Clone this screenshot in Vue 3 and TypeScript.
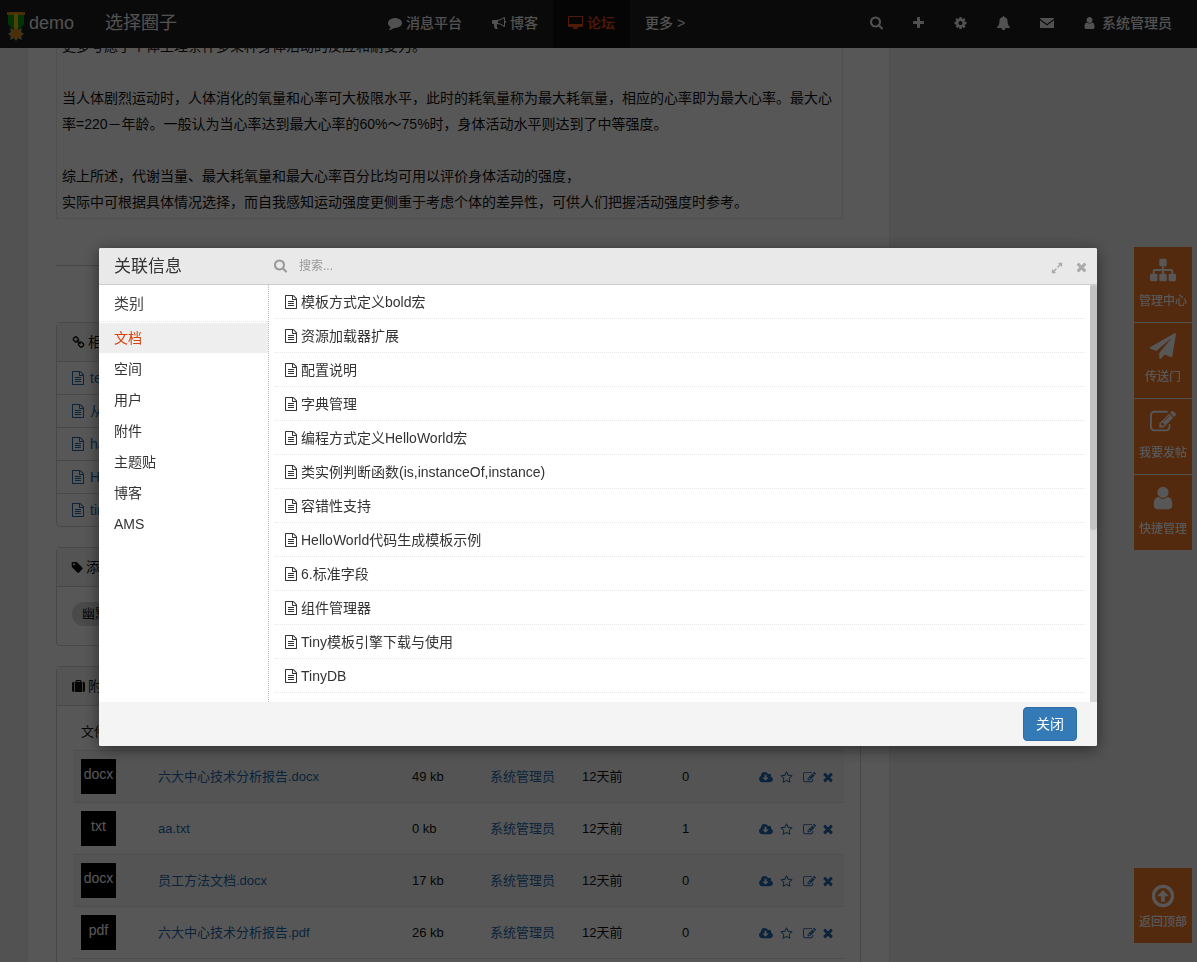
<script setup lang="ts">
import { h, ref } from 'vue'

interface Glyph {
  d: string
  box?: string
}

const glyphs: Record<string, Glyph> = {
  search: { d: 'M1216 832q0-185-131.5-316.5t-316.5-131.5-316.5 131.5-131.5 316.5 131.5 316.5 316.5 131.5 316.5-131.5 131.5-316.5zm512 832q0 52-38 90t-90 38q-54 0-90-38l-343-342q-179 124-399 124-143 0-273.5-55.5t-225-150-150-225-55.5-273.5 55.5-273.5 150-225 225-150 273.5-55.5 273.5 55.5 225 150 150 225 55.5 273.5q0 220-124 399l343 343q37 37 37 90z', box: '64 64 1664 1792' },
  file: { d: 'M1596 380q28 28 48 76t20 88v1152q0 40-28 68t-68 28h-1344q-40 0-68-28t-28-68v-1600q0-40 28-68t68-28h896q40 0 88 20t76 48zm-444-244v376h376q-10-29-22-41l-313-313q-12-12-41-22zm384 1528v-1024h-416q-40 0-68-28t-28-68v-416h-768v1536h1280zm-1024-864q0-14 9-23t23-9h704q14 0 23 9t9 23v64q0 14-9 23t-23 9h-704q-14 0-23-9t-9-23v-64zm736 224q14 0 23 9t9 23v64q0 14-9 23t-23 9h-704q-14 0-23-9t-9-23v-64q0-14 9-23t23-9h704zm0 256q14 0 23 9t9 23v64q0 14-9 23t-23 9h-704q-14 0-23-9t-9-23v-64q0-14 9-23t23-9h704z', box: '128 0 1536 1792' },
  plus: { d: 'M1600 736v192q0 40-28 68t-68 28h-416v416q0 40-28 68t-68 28h-192q-40 0-68-28t-28-68v-416h-416q-40 0-68-28t-28-68v-192q0-40 28-68t68-28h416v-416q0-40 28-68t68-28h192q40 0 68 28t28 68v416h416q40 0 68 28t28 68z', box: '192 0 1408 1792' },
  cog: { d: 'M1152 896q0-106-75-181t-181-75-181 75-75 181 75 181 181 75 181-75 75-181zm512-109v222q0 12-8 23t-20 13l-185 28q-19 54-39 91 35 50 107 138 10 12 10 25t-9 23q-27 37-99 108t-94 71q-12 0-26-9l-138-108q-44 23-91 38-16 136-29 186-7 28-36 28h-222q-14 0-24.5-8.5t-11.5-21.5l-28-184q-49-16-90-37l-141 107q-10 9-25 9-14 0-25-11-126-114-165-168-7-10-7-23 0-12 8-23 15-21 51-66.5t54-70.5q-27-50-41-99l-183-27q-13-2-21-12.5t-8-23.5v-222q0-12 8-23t19-13l186-28q14-46 39-92-40-57-107-138-10-12-10-24 0-10 9-23 26-36 98.5-107.5t94.5-71.5q13 0 26 10l138 107q44-23 91-38 16-136 29-186 7-28 36-28h222q14 0 24.5 8.5t11.5 21.5l28 184q49 16 90 37l142-107q9-9 24-9 13 0 25 10 129 119 165 170 7 8 7 22 0 12-8 23-15 21-51 66.5t-54 70.5q26 50 41 98l183 28q13 2 21 12.5t8 23.5z', box: '128 0 1536 1792' },
  bell: { d: 'M1728 1408q0 52-38 90t-90 38h-448q0 106-75 181t-181 75-181-75-75-181h-448q-52 0-90-38t-38-90q50-42 91-88t85-119.5 74.5-158.5 50-206 19.5-260q0-152 117-282.5t307-158.5q-8-19-8-39 0-40 28-68t68-28 68 28 28 68q0 20-8 39 190 28 307 158.5t117 282.5q0 139 19.5 260t50 206 74.5 158.5 85 119.5 91 88z', box: '64 0 1664 1792' },
  envelope: { d: 'M0 256h1792v100l-896 680-896-680zM0 530l896 690 896-690v1006h-1792z' },
  user: { d: 'M1536 1399q0 109-62.5 187t-150.5 78h-854q-88 0-150.5-78t-62.5-187q0-85 8.5-160.5t31.5-152 58.5-131 94-89 134.5-34.5q131 128 313 128t313-128q76 0 134.5 34.5t94 89 58.5 131 31.5 152 8.5 160.5zm-256-887q0 159-112.5 271.5t-271.5 112.5-271.5-112.5-112.5-271.5 112.5-271.5 271.5-112.5 271.5 112.5 112.5 271.5z', box: '192 0 1408 1792' },
  desktop: { d: 'M1728 992v-832q0-13-9.5-22.5t-22.5-9.5h-1600q-13 0-22.5 9.5t-9.5 22.5v832q0 13 9.5 22.5t22.5 9.5h1600q13 0 22.5-9.5t9.5-22.5zm128-832v1088q0 66-47 113t-113 47h-544q0 37 16 77.5t32 71 16 43.5q0 26-19 45t-45 19h-512q-26 0-45-19t-19-45q0-14 16-44t32-70 16-78h-544q-66 0-113-47t-47-113v-1088q0-66 47-113t113-47h1600q66 0 113 47t47 113z', box: '-64 0 1920 1792' },
  comment: { d: 'M1792 896q0 174-120 321.5t-326 233-450 85.5q-70 0-145-8-198 175-460 242-49 14-114 22-17 2-30.5-9t-17.5-29v-1q-3-4-.5-12t2-10 4.5-9.5l6-9 7-8.5 8-9q7-8 31-34.5t34.5-38 31-39.5 32.5-51 27-59 26-76q-157-89-247.5-220t-90.5-281q0-130 71-248.5t191-204.5 286-136.5 348-50.5q244 0 450 85.5t326 233 120 321.5z' },
  bullhorn: { d: 'M1664 640q53 0 90.5 37.5t37.5 90.5-37.5 90.5-90.5 37.5v384q0 52-38 90t-90 38q-417-347-812-380-58 19-91 66t-31 100.5 40 92.5q-20 33-23 65.5t6 58 33.5 55 48 50 61.5 50.5q-29 58-111.5 83t-168.5 11.5-132-55.5q-7-23-29.5-87.5t-32-94.5-23-89-15-101 3.5-98.5 22-110.5h-122q-66 0-113-47t-47-113v-192q0-66 47-113t113-47h480q435 0 896-384 52 0 90 38t38 90v384zm-128 604v-954q-394 302-768 343v270q377 42 768 341z' },
  link: { d: 'M1520 1216q0-40-28-68l-208-208q-28-28-68-28-42 0-72 32 3 3 19 18.5t21.5 21.5 15 19 13 25.5 3.5 27.5q0 40-28 68t-68 28q-15 0-27.5-3.5t-25.5-13-19-15-21.5-21.5-18.5-19q-33 31-33 73 0 40 28 68l206 207q27 27 68 27 40 0 68-26l147-146q28-28 28-67zm-703-705q0-40-28-68l-206-207q-28-28-68-28-39 0-68 27l-147 146q-28 28-28 67 0 40 28 68l208 208q27 27 68 27 42 0 72-31-3-3-19-18.5t-21.5-21.5-15-19-13-25.5-3.5-27.5q0-40 28-68t68-28q15 0 27.5 3.5t25.5 13 19 15 21.5 21.5 18.5 19q33-31 33-73zm895 705q0 120-85 203l-147 146q-83 83-203 83-121 0-204-85l-206-207q-83-83-83-203 0-123 88-209l-88-88q-86 88-208 88-120 0-204-84l-208-208q-84-84-84-204t85-203l147-146q83-83 203-83 121 0 204 85l206 207q83 83 83 203 0 123-88 209l88 88q86-88 208-88 120 0 204 84l208 208q84 84 84 204z' },
  tag: { d: 'M576 448q0-53-37.5-90.5t-90.5-37.5-90.5 37.5-37.5 90.5 37.5 90.5 90.5 37.5 90.5-37.5 37.5-90.5zm1067 576q0 53-37 90l-491 492q-39 37-91 37-53 0-90-37l-715-716q-38-37-64.5-101t-26.5-117v-416q0-52 38-90t90-38h416q53 0 117 26.5t102 64.5l715 714q37 39 37 91z', box: '192 0 1472 1792' },
  suitcase: { d: 'M640 256h512v-128h-512v128zm-352 0v1408h-64q-92 0-158-66t-66-158v-960q0-92 66-158t158-66h64zm1120 0v1408h-1024v-1408h128v-160q0-40 28-68t68-28h576q40 0 68 28t28 68v160h128zm384 224v960q0 92-66 158t-158 66h-64v-1408h64q92 0 158 66t66 158z' },
  download: { d: 'M1216 928q0-14-9-23t-23-9h-224v-352q0-13-9.5-22.5t-22.5-9.5h-192q-13 0-22.5 9.5t-9.5 22.5v352h-224q-13 0-22.5 9.5t-9.5 22.5q0 14 9 23l352 352q9 9 23 9t23-9l351-351q10-12 10-24zm640 224q0 159-112.5 271.5t-271.5 112.5h-1088q-185 0-316.5-131.5t-131.5-316.5q0-130 70-240t188-165q-2-30-2-43 0-212 150-362t362-150q156 0 285.5 87t188.5 231q71-62 166-62 106 0 181 75t75 181q0 76-41 138 130 31 213.5 135.5t83.5 238.5z', box: '-64 0 1920 1792' },
  star: { d: 'M1201 1004l306-297-422-62-189-382-189 382-422 62 306 297-73 421 378-199 377 199zm527-357q0 22-26 48l-363 354 86 500q1 7 1 20 0 50-41 50-19 0-40-12l-449-236-449 236q-22 12-40 12-21 0-31.5-14.5t-10.5-35.5q0-6 2-20l86-500-364-354q-25-27-25-48 0-37 56-46l502-73 225-455q19-41 49-41t49 41l225 455 502 73q56 9 56 46z' },
  edit: { d: 'M888 1184l116-116-152-152-116 116v56h96v96h56zm440-720q-16-16-33 1l-350 350q-17 17-1 33t33-1l350-350q17-17 1-33zm80 594v190q0 119-84.5 203.5t-203.5 84.5h-832q-119 0-203.5-84.5t-84.5-203.5v-832q0-119 84.5-203.5t203.5-84.5h832q63 0 117 25 15 7 18 23 3 17-9 29l-49 49q-14 14-32 8-23-6-45-6h-832q-66 0-113 47t-47 113v832q0 66 47 113t113 47h832q66 0 113-47t47-113v-126q0-13 9-22l64-64q15-15 35-7t20 29zm-96-738l288 288-672 672h-288v-288zm444 132l-92 92-288-288 92-92q28-28 68-28t68 28l152 152q28 28 28 68t-28 68z' },
  times: { d: 'M1490 1322q0 40-28 68l-136 136q-28 28-68 28t-68-28l-294-294-294 294q-28 28-68 28t-68-28l-136-136q-28-28-28-68t28-68l294-294-294-294q-28-28-28-68t28-68l136-136q28-28 68-28t68 28l294 294 294-294q28-28 68-28t68 28l136 136q28 28 28 68t-28 68l-294 294 294 294q28 28 28 68z', box: '256 128 1280 1664' },
  sitemap: { d: 'M1792 1248v320q0 40-28 68t-68 28h-320q-40 0-68-28t-28-68v-320q0-40 28-68t68-28h96v-192h-512v192h96q40 0 68 28t28 68v320q0 40-28 68t-68 28h-320q-40 0-68-28t-28-68v-320q0-40 28-68t68-28h96v-192h-512v192h96q40 0 68 28t28 68v320q0 40-28 68t-68 28h-320q-40 0-68-28t-28-68v-320q0-40 28-68t68-28h96v-192q0-52 38-90t90-38h512v-192h-96q-40 0-68-28t-28-68v-320q0-40 28-68t68-28h320q40 0 68 28t28 68v320q0 40-28 68t-68 28h-96v192h512q52 0 90 38t38 90v192h96q40 0 68 28t28 68z' },
  plane: { d: 'M1764 11q33 24 27 64l-256 1536q-5 29-32 45-14 8-31 8-11 0-24-5l-453-185-242 295q-18 23-49 23-13 0-22-4-19-7-30.5-23.5t-11.5-36.5v-349l864-1059-1069 925-395-162q-37-14-40-55-2-40 32-59l1664-960q15-9 32-9 20 0 36 11z' },
  top: { d: 'M896 128a768 768 0 1 0 0 1536a768 768 0 1 0 0-1536zm0 224a544 544 0 1 1 0 1088a544 544 0 1 1 0-1088zM896 500q14 0 23 9l351 351q10 12 10 24 0 13-9.5 22.5t-22.5 9.5h-224v352q0 13-9.5 22.5t-22.5 9.5h-192q-13 0-22.5-9.5t-9.5-22.5v-352h-224q-14 0-23-9t-9-23q0-13 9-23l353-352q9-9 23-9z' },
  expand: { d: 'M883 1056q0 13-10 23l-332 332 144 144q19 19 19 45t-19 45-45 19h-448q-26 0-45-19t-19-45v-448q0-26 19-45t45-19 45 19l144 144 332-332q10-10 23-10t23 10l114 114q10 10 10 23zm781-864v448q0 26-19 45t-45 19-45-19l-144-144-332 332q-10 10-23 10t-23-10l-114-114q-10-10-10-23t10-23l332-332-144-144q-19-19-19-45t19-45 45-19h448q26 0 45 19t19 45z' },
}

const Icon = (props: { name: string }) => {
  const g = glyphs[props.name]
  return h(
    'svg',
    { class: 'icon', viewBox: g.box ?? '0 0 1792 1792', 'aria-hidden': 'true' },
    [h('path', { d: g.d })],
  )
}
Icon.props = ['name']

const tools = [
  { icon: 'search', label: '搜索' },
  { icon: 'plus', label: '新建' },
  { icon: 'cog', label: '设置' },
  { icon: 'bell', label: '通知' },
  { icon: 'envelope', label: '消息' },
]

const related = ['te', '从', 'ha', 'He', 'tin']

const files = [
  { type: 'docx', name: '六大中心技术分析报告.docx', size: '49 kb', count: 0 },
  { type: 'txt', name: 'aa.txt', size: '0 kb', count: 1 },
  { type: 'docx', name: '员工方法文档.docx', size: '17 kb', count: 0 },
  { type: 'pdf', name: '六大中心技术分析报告.pdf', size: '26 kb', count: 0 },
]

const shortcuts = [
  { icon: 'sitemap', label: '管理中心' },
  { icon: 'plane', label: '传送门' },
  { icon: 'edit', label: '我要发帖' },
  { icon: 'user', label: '快捷管理' },
]

const categories = ['文档', '空间', '用户', '附件', '主题贴', '博客', 'AMS']
const current = ref('文档')
const keyword = ref('')

const documents = [
  '模板方式定义bold宏',
  '资源加载器扩展',
  '配置说明',
  '字典管理',
  '编程方式定义HelloWorld宏',
  '类实例判断函数(is,instanceOf,instance)',
  '容错性支持',
  'HelloWorld代码生成模板示例',
  '6.标准字段',
  '组件管理器',
  'Tiny模板引擎下载与使用',
  'TinyDB',
]
</script>

<template>
  <div class="page">
    <header class="navbar">
      <div class="brand-area">
        <a class="brand" href="#">
          <svg class="medal" viewBox="0 0 18 30" aria-hidden="true">
            <path d="M1 2h16v10l-5 5H6l-5-5z" fill="#0a9a10" />
            <path d="M0 0h18v3H0z" fill="#d98a10" />
            <path d="M7 2h4v15H7z" fill="#e8c000" />
            <path d="M9 16l2 2 4-2-1 4 3 2-3 2 1 4-4-2-2 3-2-3-4 2 1-4-3-2 3-2-1-4 4 2z" fill="#a8a898" />
            <circle cx="9" cy="22" r="5" fill="#e08a10" />
          </svg>
          <span>demo</span>
        </a>
        <a class="circle" href="#">选择圈子</a>
      </div>
      <nav class="menu">
        <a href="#"><Icon name="comment" />消息平台</a>
        <a href="#"><Icon name="bullhorn" />博客</a>
        <a href="#" class="active"><Icon name="desktop" class="wide" />论坛</a>
        <a href="#">更多 &gt;</a>
      </nav>
      <div class="tools">
        <a v-for="t in tools" :key="t.icon" href="#" :aria-label="t.label"><Icon :name="t.icon" :class="t.icon" /></a>
        <a href="#" class="account"><Icon name="user" class="user" />系统管理员</a>
      </div>
    </header>

    <main class="content">
      <article class="post">
        <p>更多考虑了个体生理条件多某种身体活动的反应和耐受力。</p>
        <p>当人体剧烈运动时，人体消化的氧量和心率可大极限水平，此时的耗氧量称为最大耗氧量，相应的心率即为最大心率。最大心率=220－年龄。一般认为当心率达到最大心率的60%～75%时，身体活动水平则达到了中等强度。</p>
        <p>综上所述，代谢当量、最大耗氧量和最大心率百分比均可用以评价身体活动的强度，<br />实际中可根据具体情况选择，而自我感知运动强度更侧重于考虑个体的差异性，可供人们把握活动强度时参考。</p>
      </article>
      <hr class="rule" />

      <section class="panel">
        <h2 class="panel-title"><Icon name="link" />相关</h2>
        <ul class="related">
          <li v-for="r in related" :key="r"><a href="#"><Icon name="file" class="file" />{{ r }}</a></li>
        </ul>
      </section>

      <section class="panel">
        <h2 class="panel-title"><Icon name="tag" class="tag-icon" />添加</h2>
        <div class="tags"><span class="tag">幽默</span></div>
      </section>

      <section class="panel">
        <h2 class="panel-title"><Icon name="suitcase" />附件</h2>
        <div class="files">
          <table>
            <colgroup>
              <col class="c-type" /><col /><col class="c-size" /><col class="c-user" /><col class="c-time" /><col class="c-count" /><col class="c-act" />
            </colgroup>
            <thead>
              <tr><th colspan="7" scope="col">文件</th></tr>
            </thead>
            <tbody>
              <tr v-for="f in files" :key="f.name">
                <td><span class="thumb">{{ f.type }}</span></td>
                <td><a href="#">{{ f.name }}</a></td>
                <td>{{ f.size }}</td>
                <td><a href="#">系统管理员</a></td>
                <td>12天前</td>
                <td>{{ f.count }}</td>
                <td>
                  <div class="actions">
                    <a href="#" aria-label="下载"><Icon name="download" class="wide" /></a>
                    <a href="#" aria-label="收藏"><Icon name="star" /></a>
                    <a href="#" aria-label="编辑"><Icon name="edit" /></a>
                    <a href="#" aria-label="删除"><Icon name="times" class="times" /></a>
                  </div>
                </td>
              </tr>
            </tbody>
          </table>
        </div>
      </section>
    </main>

    <aside class="dock">
      <a v-for="s in shortcuts" :key="s.label" href="#"><Icon :name="s.icon" />{{ s.label }}</a>
    </aside>
    <aside class="dock dock-bottom">
      <a href="#"><Icon name="top" />返回顶部</a>
    </aside>

    <div class="overlay">
      <section class="dialog" role="dialog" aria-labelledby="dialog-title">
        <header class="dialog-head">
          <h1 id="dialog-title">关联信息</h1>
          <label class="finder">
            <Icon name="search" class="search" />
            <input v-model="keyword" type="text" placeholder="搜索..." aria-label="搜索" />
          </label>
          <button type="button" class="plain" aria-label="最大化"><Icon name="expand" class="expand" /></button>
          <button type="button" class="plain" aria-label="关闭窗口"><Icon name="times" class="close" /></button>
        </header>
        <div class="dialog-body">
          <nav class="cats">
            <h3>类别</h3>
            <a v-for="c in categories" :key="c" href="#" :class="{ on: c === current }" @click.prevent="current = c">{{ c }}</a>
          </nav>
          <ul class="docs">
            <li v-for="d in documents" :key="d"><a href="#"><Icon name="file" class="file" />{{ d }}</a></li>
          </ul>
          <div class="track"><div class="grip"></div></div>
        </div>
        <footer class="dialog-foot">
          <button type="button" class="primary">关闭</button>
        </footer>
      </section>
    </div>
  </div>
</template>

<style>
body {
  margin: 0;
  background: #f0f0f0;
}
</style>

<style scoped>
.page {
  height: 100vh;
  overflow: hidden;
  background: #f0f0f0;
  color: #111;
  font: 14px/20px "Liberation Sans", "Noto Sans CJK SC", sans-serif;
}
.page * {
  box-sizing: border-box;
}
a {
  color: #2469ad;
  text-decoration: none;
}
ul, p, h1, h2, h3 {
  margin: 0;
  padding: 0;
  list-style: none;
  font-weight: 400;
}
.icon {
  width: 14px;
  height: 14px;
  flex: none;
  fill: currentColor;
  overflow: visible;
}
.icon.wide {
  width: 15px;
}
.icon.file {
  width: 12px;
}
.icon.search {
  width: 13px;
}

.navbar {
  position: fixed;
  inset: 0 0 auto 0;
  height: 48px;
  display: flex;
  background: #1f1f1f;
}
.navbar a {
  color: #eee;
  display: flex;
  align-items: center;
}
.brand-area {
  width: 373px;
  display: flex;
  padding-left: 7px;
  padding-bottom: 2px;
  font-size: 18px;
}
.brand {
  width: 98px;
  gap: 4px;
}
.medal {
  width: 18px;
  height: 30px;
  margin-top: 8px;
}
.menu {
  display: flex;
  flex: 1;
}
.menu a {
  padding: 0 15px 2px;
  gap: 4px;
  font-weight: 500;
}
.menu a.active {
  background: #0f0f0f;
  color: #ef4f10;
}
.tools {
  display: flex;
  padding-right: 10px;
}
.tools a {
  padding: 0 15px 2px;
}
.icon.plus {
  width: 11px;
}
.icon.cog,
.icon.bell {
  width: 13px;
}
.icon.user {
  width: 11px;
}
.tools .account {
  gap: 7px;
  font-weight: 500;
}

.content {
  margin: 0 308px 0 28px;
  padding: 0 28px;
  min-height: 100vh;
  background: #fff;
  box-shadow: 0 0 1px #ccc;
}
.post {
  margin-right: 18px;
  padding: 33px 5px 3px;
  border: 1px solid #e6e6e6;
  border-top: 0;
  line-height: 26px;
}
.post p + p {
  margin-top: 26px;
}
.rule {
  margin: 46px 0 56px;
  border: 0;
  border-top: 1px solid #ccc;
}
.panel {
  margin-bottom: 20px;
  border: 1px solid #d4d4d4;
  border-radius: 4px;
}
.panel-title {
  height: 38px;
  padding: 0 15px;
  display: flex;
  align-items: center;
  gap: 3px;
  background: #f5f5f5;
  font-size: 14px;
}
.panel-title .icon {
  width: 13px;
  height: 13px;
}
.panel-title .tag-icon {
  width: 11px;
}
.related li {
  height: 33px;
  padding: 0 15px;
  border-top: 1px solid #d4d4d4;
  display: flex;
}
.related a {
  display: flex;
  align-items: center;
  gap: 6px;
}
.tags {
  border-top: 1px solid #d4d4d4;
  padding: 15px 15px 19px;
  display: flex;
}
.tag {
  padding: 0 10px;
  border-radius: 12px;
  background: #d8d8d8;
  font-size: 13px;
  line-height: 24px;
}
.files {
  border-top: 1px solid #d4d4d4;
  padding: 15px 16px;
}
table {
  width: 100%;
  table-layout: fixed;
  border-collapse: collapse;
  font-size: 13px;
}
.c-type { width: 77px; }
.c-size { width: 78px; }
.c-user { width: 92px; }
.c-time { width: 100px; }
.c-count { width: 77px; }
.c-act { width: 93px; }
th {
  height: 29px;
  padding: 0 8px 8px;
  text-align: left;
  font-weight: 400;
  vertical-align: bottom;
}
td {
  height: 52px;
  padding: 0 8px;
  border-top: 1px solid #e4e4e4;
}
td + td {
  padding-top: 2px;
}
tbody tr:nth-child(odd) {
  background: #f7f7f7;
}
tbody tr:last-child td {
  border-bottom: 1px solid #e4e4e4;
}
.thumb {
  display: block;
  width: 35px;
  height: 35px;
  background: #000;
  color: #fff;
  font-size: 14px;
  line-height: 30px;
  text-align: center;
}
.actions {
  display: flex;
  gap: 7px;
}
.actions a {
  display: flex;
}
.actions a:nth-child(3) {
  margin-left: 3px;
}
.actions .icon {
  width: 13px;
  height: 13px;
}
.actions .icon.wide {
  width: 14px;
}
.actions .icon.times {
  width: 10px;
}

.dock {
  position: fixed;
  top: 247px;
  right: 5px;
  width: 58px;
  display: flex;
  flex-direction: column;
  gap: 1px;
}
.dock a {
  height: 75px;
  padding-top: 10px;
  display: flex;
  flex-direction: column;
  align-items: center;
  gap: 9px;
  background: #f67b2a;
  color: #fff;
  font-size: 12px;
  font-weight: 500;
  line-height: 18px;
}
.dock .icon {
  width: 26px;
  height: 26px;
}
.dock-bottom {
  top: auto;
  bottom: 19px;
}
.dock-bottom a {
  padding-top: 15px;
  gap: 4px;
}

.overlay {
  position: fixed;
  inset: 0;
  padding: 248px 100px 0 99px;
  background: rgba(0, 0, 0, 0.66);
}
.dialog {
  border-radius: 2px;
  overflow: hidden;
  background: #fff;
  box-shadow: 0 3px 16px rgba(0, 0, 0, 0.5);
  color: #333;
}
.dialog-head {
  height: 37px;
  display: flex;
  align-items: center;
  padding-right: 10px;
  background: #e9e9e9;
  border-bottom: 1px solid #ccc;
}
h1 {
  width: 175px;
  padding: 2px 0 0 15px;
  font-size: 17px;
}
.finder {
  flex: 1;
  display: flex;
  align-items: center;
  gap: 12px;
  color: #999;
}
input {
  flex: 1;
  padding: 0;
  border: 0;
  outline: 0;
  background: transparent;
  font: inherit;
  font-size: 12px;
}
input::placeholder {
  color: #999;
}
button {
  border: 0;
  background: transparent;
  font: inherit;
  color: #aaa;
}
.plain {
  padding: 3px 0 0;
  display: flex;
  margin-left: 13px;
}
.icon.expand {
  width: 12px;
  height: 12px;
}
.icon.close {
  width: 11px;
  height: 13px;
}
.dialog-body {
  display: flex;
  height: 417px;
}
.cats {
  width: 170px;
  border-right: 1px dotted #bbb;
}
h3 {
  height: 37px;
  margin-bottom: 1px;
  padding-left: 15px;
  border-bottom: 1px dotted #e4e4e4;
  font-size: 15px;
  line-height: 37px;
  color: #444;
}
.cats a {
  display: block;
  margin-bottom: 1px;
  padding-left: 15px;
  line-height: 30px;
  color: #333;
}
.cats a.on {
  background: #eee;
  color: #d9410b;
}
.docs {
  flex: 1;
  padding: 0 5px 0 6px;
}
.docs li {
  height: 34px;
  padding-left: 10px;
  border-bottom: 1px dotted #e8e8e8;
  display: flex;
}
.docs a {
  display: flex;
  align-items: center;
  gap: 4px;
  color: #333;
}
.track {
  width: 7px;
  background: #d8d8d8;
}
.grip {
  height: 245px;
  border-radius: 4px;
  background: #c2c2c2;
}
.dialog-foot {
  height: 44px;
  padding: 0 20px;
  display: flex;
  align-items: center;
  justify-content: flex-end;
  background: #f4f4f4;
}
.primary {
  height: 34px;
  padding: 0 12px;
  border: 1px solid #2e6da4;
  border-radius: 4px;
  background: #337ab7;
  color: #fff;
}
</style>
